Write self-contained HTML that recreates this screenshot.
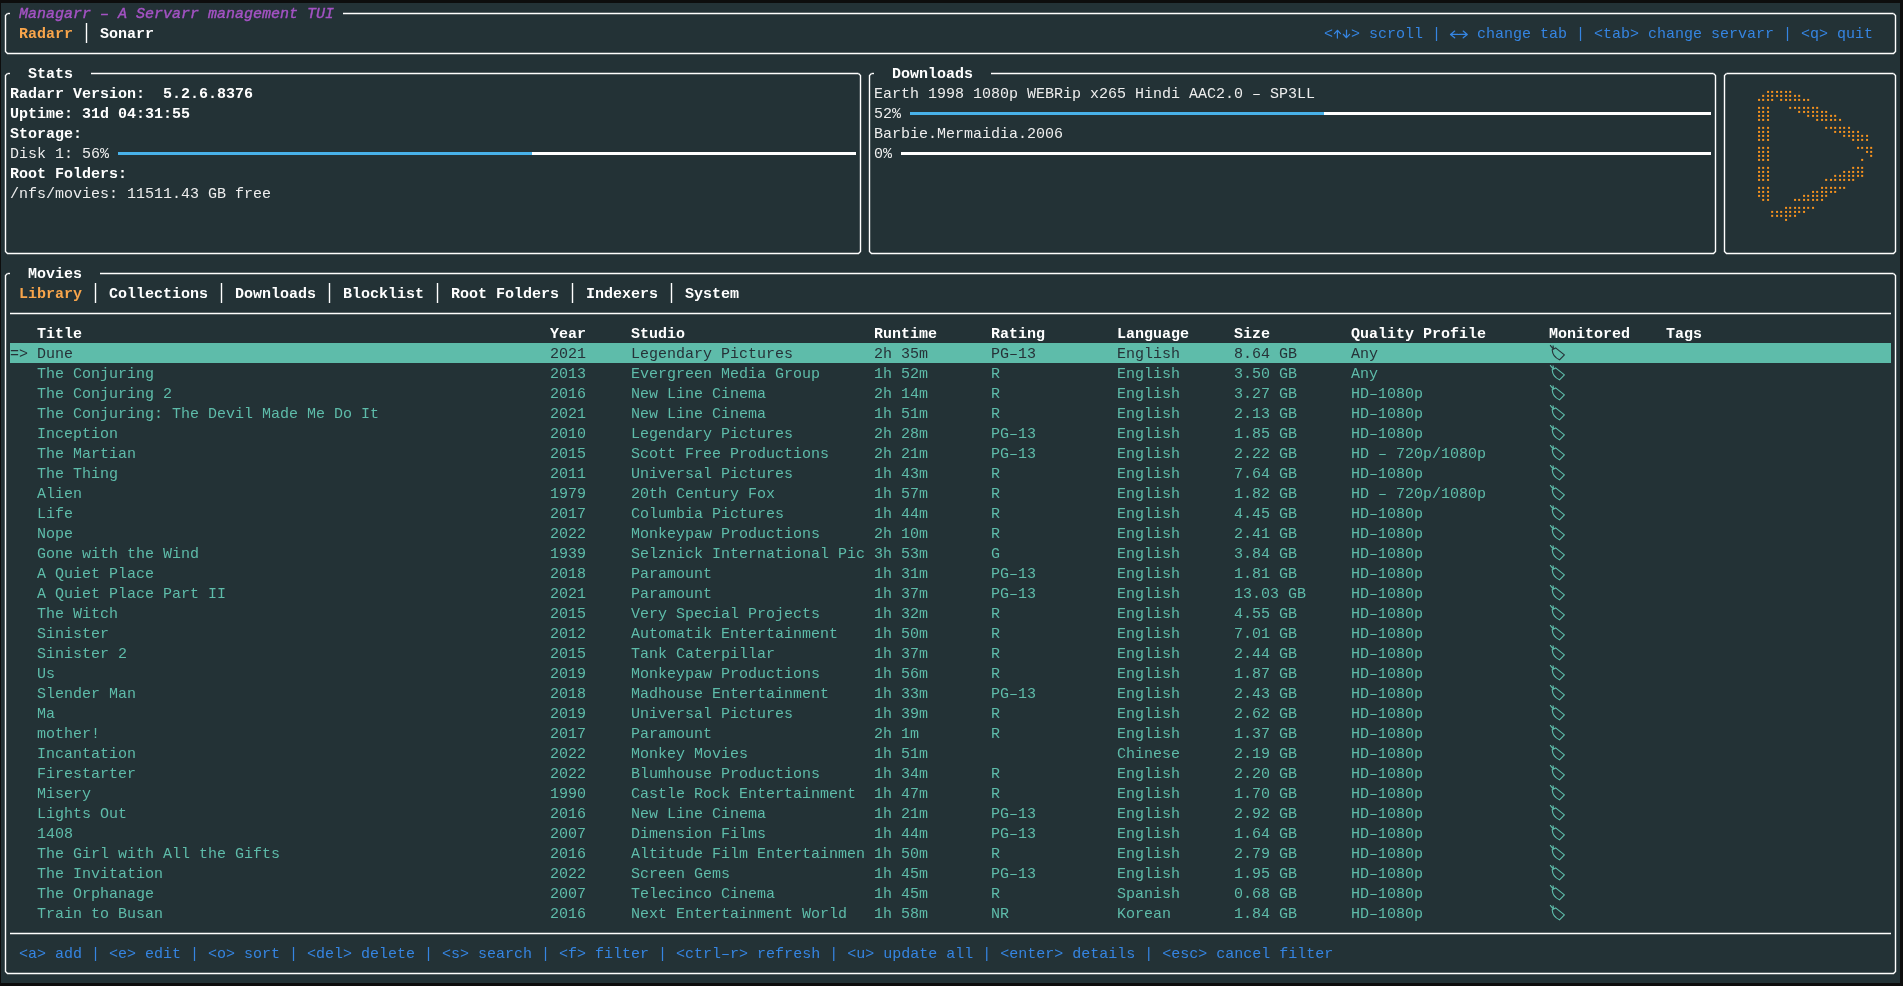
<!DOCTYPE html>
<html><head><meta charset="utf-8"><style>
html,body{margin:0;padding:0;width:1903px;height:986px;overflow:hidden;background:#0d0d0d;}
#term{position:absolute;left:1px;top:3px;width:1899px;height:980px;background:#233236;}
.t{position:absolute;white-space:pre;font-family:"Liberation Mono",monospace;font-size:15px;line-height:20px;height:20px;}
svg{position:absolute;left:0;top:0;}
#txt{position:absolute;left:0;top:0;width:1903px;height:986px;will-change:transform;}
</style></head><body>
<div id="term"></div>
<div style="position:absolute;left:10px;top:343px;width:1881px;height:20px;background:#5ebcaa"></div>
<svg width="1903" height="986" viewBox="0 0 1903 986"><path d="M7.5,13.5 L5.5,15.5 L5.5,51.5 L7.5,53.5 L1893.5,53.5 L1895.5,51.5 L1895.5,15.5 L1893.5,13.5" fill="none" stroke="#ffffff" stroke-width="1.4"/><line x1="7.5" y1="13.5" x2="10" y2="13.5" stroke="#ffffff" stroke-width="1.4"/><line x1="343" y1="13.5" x2="1893.5" y2="13.5" stroke="#ffffff" stroke-width="1.4"/><line x1="86.5" y1="23" x2="86.5" y2="43" stroke="#ffffff" stroke-width="1.4"/><path d="M1337.4,38 L1337.4,30.4 M1334.4,33.6 L1337.4,30.3 L1340.5,33.6 M1346.5,30.1 L1346.5,37.7 M1343.3,34.3 L1346.5,37.7 L1349.6,34.3 M1450.6,34.45 L1458.2,34.45 M1454.7,31.1 L1450.5,34.45 L1454.7,37.8 M1459.3,34.45 L1467.0,34.45 M1463.2,31.1 L1467.3,34.45 L1463.2,37.8 " fill="none" stroke="#3585e2" stroke-width="1.25" stroke-linecap="round" stroke-linejoin="round"/><path d="M7.5,73.5 L5.5,75.5 L5.5,251.5 L7.5,253.5 L858.5,253.5 L860.5,251.5 L860.5,75.5 L858.5,73.5" fill="none" stroke="#ffffff" stroke-width="1.4"/><line x1="7.5" y1="73.5" x2="10" y2="73.5" stroke="#ffffff" stroke-width="1.4"/><line x1="91" y1="73.5" x2="858.5" y2="73.5" stroke="#ffffff" stroke-width="1.4"/><rect x="118" y="152" width="414" height="3" fill="#48b2ea"/><rect x="532" y="152" width="324" height="3" fill="#ffffff"/><path d="M871.5,73.5 L869.5,75.5 L869.5,251.5 L871.5,253.5 L1713.5,253.5 L1715.5,251.5 L1715.5,75.5 L1713.5,73.5" fill="none" stroke="#ffffff" stroke-width="1.4"/><line x1="871.5" y1="73.5" x2="874" y2="73.5" stroke="#ffffff" stroke-width="1.4"/><line x1="991" y1="73.5" x2="1713.5" y2="73.5" stroke="#ffffff" stroke-width="1.4"/><rect x="910" y="112" width="414" height="3" fill="#48b2ea"/><rect x="1324" y="112" width="387" height="3" fill="#ffffff"/><rect x="901" y="152" width="810" height="3" fill="#ffffff"/><path d="M1726.5,73.5 L1724.5,75.5 L1724.5,251.5 L1726.5,253.5 L1893.5,253.5 L1895.5,251.5 L1895.5,75.5 L1893.5,73.5" fill="none" stroke="#ffffff" stroke-width="1.4"/><line x1="1726.5" y1="73.5" x2="1893.5" y2="73.5" stroke="#ffffff" stroke-width="1.4"/><rect x="1767.06" y="90.90" width="2" height="2" fill="#f7931e"/><rect x="1771.17" y="90.90" width="2" height="2" fill="#f7931e"/><rect x="1776.06" y="90.90" width="2" height="2" fill="#f7931e"/><rect x="1780.17" y="90.90" width="2" height="2" fill="#f7931e"/><rect x="1785.06" y="90.90" width="2" height="2" fill="#f7931e"/><rect x="1789.17" y="90.90" width="2" height="2" fill="#f7931e"/><rect x="1762.17" y="94.85" width="2" height="2" fill="#f7931e"/><rect x="1767.06" y="94.85" width="2" height="2" fill="#f7931e"/><rect x="1771.17" y="94.85" width="2" height="2" fill="#f7931e"/><rect x="1776.06" y="94.85" width="2" height="2" fill="#f7931e"/><rect x="1780.17" y="94.85" width="2" height="2" fill="#f7931e"/><rect x="1785.06" y="94.85" width="2" height="2" fill="#f7931e"/><rect x="1789.17" y="94.85" width="2" height="2" fill="#f7931e"/><rect x="1794.06" y="94.85" width="2" height="2" fill="#f7931e"/><rect x="1798.17" y="94.85" width="2" height="2" fill="#f7931e"/><rect x="1758.06" y="98.90" width="2" height="2" fill="#f7931e"/><rect x="1762.17" y="98.90" width="2" height="2" fill="#f7931e"/><rect x="1767.06" y="98.90" width="2" height="2" fill="#f7931e"/><rect x="1771.17" y="98.90" width="2" height="2" fill="#f7931e"/><rect x="1780.17" y="98.90" width="2" height="2" fill="#f7931e"/><rect x="1785.06" y="98.90" width="2" height="2" fill="#f7931e"/><rect x="1789.17" y="98.90" width="2" height="2" fill="#f7931e"/><rect x="1794.06" y="98.90" width="2" height="2" fill="#f7931e"/><rect x="1798.17" y="98.90" width="2" height="2" fill="#f7931e"/><rect x="1803.06" y="98.90" width="2" height="2" fill="#f7931e"/><rect x="1807.17" y="98.90" width="2" height="2" fill="#f7931e"/><rect x="1758.06" y="106.85" width="2" height="2" fill="#f7931e"/><rect x="1762.17" y="106.85" width="2" height="2" fill="#f7931e"/><rect x="1767.06" y="106.85" width="2" height="2" fill="#f7931e"/><rect x="1789.17" y="106.85" width="2" height="2" fill="#f7931e"/><rect x="1794.06" y="106.85" width="2" height="2" fill="#f7931e"/><rect x="1798.17" y="106.85" width="2" height="2" fill="#f7931e"/><rect x="1803.06" y="106.85" width="2" height="2" fill="#f7931e"/><rect x="1807.17" y="106.85" width="2" height="2" fill="#f7931e"/><rect x="1812.06" y="106.85" width="2" height="2" fill="#f7931e"/><rect x="1816.17" y="106.85" width="2" height="2" fill="#f7931e"/><rect x="1758.06" y="110.90" width="2" height="2" fill="#f7931e"/><rect x="1762.17" y="110.90" width="2" height="2" fill="#f7931e"/><rect x="1767.06" y="110.90" width="2" height="2" fill="#f7931e"/><rect x="1798.17" y="110.90" width="2" height="2" fill="#f7931e"/><rect x="1803.06" y="110.90" width="2" height="2" fill="#f7931e"/><rect x="1807.17" y="110.90" width="2" height="2" fill="#f7931e"/><rect x="1812.06" y="110.90" width="2" height="2" fill="#f7931e"/><rect x="1816.17" y="110.90" width="2" height="2" fill="#f7931e"/><rect x="1821.06" y="110.90" width="2" height="2" fill="#f7931e"/><rect x="1825.17" y="110.90" width="2" height="2" fill="#f7931e"/><rect x="1758.06" y="114.85" width="2" height="2" fill="#f7931e"/><rect x="1762.17" y="114.85" width="2" height="2" fill="#f7931e"/><rect x="1767.06" y="114.85" width="2" height="2" fill="#f7931e"/><rect x="1807.17" y="114.85" width="2" height="2" fill="#f7931e"/><rect x="1812.06" y="114.85" width="2" height="2" fill="#f7931e"/><rect x="1816.17" y="114.85" width="2" height="2" fill="#f7931e"/><rect x="1821.06" y="114.85" width="2" height="2" fill="#f7931e"/><rect x="1825.17" y="114.85" width="2" height="2" fill="#f7931e"/><rect x="1830.06" y="114.85" width="2" height="2" fill="#f7931e"/><rect x="1834.17" y="114.85" width="2" height="2" fill="#f7931e"/><rect x="1758.06" y="118.90" width="2" height="2" fill="#f7931e"/><rect x="1762.17" y="118.90" width="2" height="2" fill="#f7931e"/><rect x="1767.06" y="118.90" width="2" height="2" fill="#f7931e"/><rect x="1816.17" y="118.90" width="2" height="2" fill="#f7931e"/><rect x="1821.06" y="118.90" width="2" height="2" fill="#f7931e"/><rect x="1825.17" y="118.90" width="2" height="2" fill="#f7931e"/><rect x="1830.06" y="118.90" width="2" height="2" fill="#f7931e"/><rect x="1834.17" y="118.90" width="2" height="2" fill="#f7931e"/><rect x="1839.06" y="118.90" width="2" height="2" fill="#f7931e"/><rect x="1758.06" y="126.85" width="2" height="2" fill="#f7931e"/><rect x="1762.17" y="126.85" width="2" height="2" fill="#f7931e"/><rect x="1767.06" y="126.85" width="2" height="2" fill="#f7931e"/><rect x="1825.17" y="126.85" width="2" height="2" fill="#f7931e"/><rect x="1830.06" y="126.85" width="2" height="2" fill="#f7931e"/><rect x="1834.17" y="126.85" width="2" height="2" fill="#f7931e"/><rect x="1839.06" y="126.85" width="2" height="2" fill="#f7931e"/><rect x="1843.17" y="126.85" width="2" height="2" fill="#f7931e"/><rect x="1848.06" y="126.85" width="2" height="2" fill="#f7931e"/><rect x="1758.06" y="130.90" width="2" height="2" fill="#f7931e"/><rect x="1762.17" y="130.90" width="2" height="2" fill="#f7931e"/><rect x="1767.06" y="130.90" width="2" height="2" fill="#f7931e"/><rect x="1834.17" y="130.90" width="2" height="2" fill="#f7931e"/><rect x="1839.06" y="130.90" width="2" height="2" fill="#f7931e"/><rect x="1843.17" y="130.90" width="2" height="2" fill="#f7931e"/><rect x="1848.06" y="130.90" width="2" height="2" fill="#f7931e"/><rect x="1852.17" y="130.90" width="2" height="2" fill="#f7931e"/><rect x="1857.06" y="130.90" width="2" height="2" fill="#f7931e"/><rect x="1758.06" y="134.85" width="2" height="2" fill="#f7931e"/><rect x="1762.17" y="134.85" width="2" height="2" fill="#f7931e"/><rect x="1767.06" y="134.85" width="2" height="2" fill="#f7931e"/><rect x="1843.17" y="134.85" width="2" height="2" fill="#f7931e"/><rect x="1848.06" y="134.85" width="2" height="2" fill="#f7931e"/><rect x="1852.17" y="134.85" width="2" height="2" fill="#f7931e"/><rect x="1857.06" y="134.85" width="2" height="2" fill="#f7931e"/><rect x="1861.17" y="134.85" width="2" height="2" fill="#f7931e"/><rect x="1866.06" y="134.85" width="2" height="2" fill="#f7931e"/><rect x="1758.06" y="138.90" width="2" height="2" fill="#f7931e"/><rect x="1762.17" y="138.90" width="2" height="2" fill="#f7931e"/><rect x="1767.06" y="138.90" width="2" height="2" fill="#f7931e"/><rect x="1852.17" y="138.90" width="2" height="2" fill="#f7931e"/><rect x="1857.06" y="138.90" width="2" height="2" fill="#f7931e"/><rect x="1861.17" y="138.90" width="2" height="2" fill="#f7931e"/><rect x="1866.06" y="138.90" width="2" height="2" fill="#f7931e"/><rect x="1758.06" y="146.85" width="2" height="2" fill="#f7931e"/><rect x="1762.17" y="146.85" width="2" height="2" fill="#f7931e"/><rect x="1767.06" y="146.85" width="2" height="2" fill="#f7931e"/><rect x="1857.06" y="146.85" width="2" height="2" fill="#f7931e"/><rect x="1861.17" y="146.85" width="2" height="2" fill="#f7931e"/><rect x="1866.06" y="146.85" width="2" height="2" fill="#f7931e"/><rect x="1870.17" y="146.85" width="2" height="2" fill="#f7931e"/><rect x="1758.06" y="150.90" width="2" height="2" fill="#f7931e"/><rect x="1762.17" y="150.90" width="2" height="2" fill="#f7931e"/><rect x="1767.06" y="150.90" width="2" height="2" fill="#f7931e"/><rect x="1866.06" y="150.90" width="2" height="2" fill="#f7931e"/><rect x="1870.17" y="150.90" width="2" height="2" fill="#f7931e"/><rect x="1758.06" y="154.85" width="2" height="2" fill="#f7931e"/><rect x="1762.17" y="154.85" width="2" height="2" fill="#f7931e"/><rect x="1767.06" y="154.85" width="2" height="2" fill="#f7931e"/><rect x="1870.17" y="154.85" width="2" height="2" fill="#f7931e"/><rect x="1758.06" y="158.90" width="2" height="2" fill="#f7931e"/><rect x="1762.17" y="158.90" width="2" height="2" fill="#f7931e"/><rect x="1767.06" y="158.90" width="2" height="2" fill="#f7931e"/><rect x="1861.17" y="158.90" width="2" height="2" fill="#f7931e"/><rect x="1758.06" y="166.85" width="2" height="2" fill="#f7931e"/><rect x="1762.17" y="166.85" width="2" height="2" fill="#f7931e"/><rect x="1767.06" y="166.85" width="2" height="2" fill="#f7931e"/><rect x="1852.17" y="166.85" width="2" height="2" fill="#f7931e"/><rect x="1857.06" y="166.85" width="2" height="2" fill="#f7931e"/><rect x="1861.17" y="166.85" width="2" height="2" fill="#f7931e"/><rect x="1758.06" y="170.90" width="2" height="2" fill="#f7931e"/><rect x="1762.17" y="170.90" width="2" height="2" fill="#f7931e"/><rect x="1767.06" y="170.90" width="2" height="2" fill="#f7931e"/><rect x="1843.17" y="170.90" width="2" height="2" fill="#f7931e"/><rect x="1848.06" y="170.90" width="2" height="2" fill="#f7931e"/><rect x="1852.17" y="170.90" width="2" height="2" fill="#f7931e"/><rect x="1857.06" y="170.90" width="2" height="2" fill="#f7931e"/><rect x="1861.17" y="170.90" width="2" height="2" fill="#f7931e"/><rect x="1758.06" y="174.85" width="2" height="2" fill="#f7931e"/><rect x="1762.17" y="174.85" width="2" height="2" fill="#f7931e"/><rect x="1767.06" y="174.85" width="2" height="2" fill="#f7931e"/><rect x="1834.17" y="174.85" width="2" height="2" fill="#f7931e"/><rect x="1839.06" y="174.85" width="2" height="2" fill="#f7931e"/><rect x="1843.17" y="174.85" width="2" height="2" fill="#f7931e"/><rect x="1848.06" y="174.85" width="2" height="2" fill="#f7931e"/><rect x="1852.17" y="174.85" width="2" height="2" fill="#f7931e"/><rect x="1857.06" y="174.85" width="2" height="2" fill="#f7931e"/><rect x="1861.17" y="174.85" width="2" height="2" fill="#f7931e"/><rect x="1758.06" y="178.90" width="2" height="2" fill="#f7931e"/><rect x="1762.17" y="178.90" width="2" height="2" fill="#f7931e"/><rect x="1767.06" y="178.90" width="2" height="2" fill="#f7931e"/><rect x="1825.17" y="178.90" width="2" height="2" fill="#f7931e"/><rect x="1830.06" y="178.90" width="2" height="2" fill="#f7931e"/><rect x="1834.17" y="178.90" width="2" height="2" fill="#f7931e"/><rect x="1839.06" y="178.90" width="2" height="2" fill="#f7931e"/><rect x="1843.17" y="178.90" width="2" height="2" fill="#f7931e"/><rect x="1848.06" y="178.90" width="2" height="2" fill="#f7931e"/><rect x="1852.17" y="178.90" width="2" height="2" fill="#f7931e"/><rect x="1758.06" y="186.85" width="2" height="2" fill="#f7931e"/><rect x="1762.17" y="186.85" width="2" height="2" fill="#f7931e"/><rect x="1767.06" y="186.85" width="2" height="2" fill="#f7931e"/><rect x="1821.06" y="186.85" width="2" height="2" fill="#f7931e"/><rect x="1825.17" y="186.85" width="2" height="2" fill="#f7931e"/><rect x="1830.06" y="186.85" width="2" height="2" fill="#f7931e"/><rect x="1834.17" y="186.85" width="2" height="2" fill="#f7931e"/><rect x="1839.06" y="186.85" width="2" height="2" fill="#f7931e"/><rect x="1843.17" y="186.85" width="2" height="2" fill="#f7931e"/><rect x="1758.06" y="190.90" width="2" height="2" fill="#f7931e"/><rect x="1762.17" y="190.90" width="2" height="2" fill="#f7931e"/><rect x="1767.06" y="190.90" width="2" height="2" fill="#f7931e"/><rect x="1812.06" y="190.90" width="2" height="2" fill="#f7931e"/><rect x="1816.17" y="190.90" width="2" height="2" fill="#f7931e"/><rect x="1821.06" y="190.90" width="2" height="2" fill="#f7931e"/><rect x="1825.17" y="190.90" width="2" height="2" fill="#f7931e"/><rect x="1830.06" y="190.90" width="2" height="2" fill="#f7931e"/><rect x="1834.17" y="190.90" width="2" height="2" fill="#f7931e"/><rect x="1758.06" y="194.85" width="2" height="2" fill="#f7931e"/><rect x="1762.17" y="194.85" width="2" height="2" fill="#f7931e"/><rect x="1767.06" y="194.85" width="2" height="2" fill="#f7931e"/><rect x="1803.06" y="194.85" width="2" height="2" fill="#f7931e"/><rect x="1807.17" y="194.85" width="2" height="2" fill="#f7931e"/><rect x="1812.06" y="194.85" width="2" height="2" fill="#f7931e"/><rect x="1816.17" y="194.85" width="2" height="2" fill="#f7931e"/><rect x="1821.06" y="194.85" width="2" height="2" fill="#f7931e"/><rect x="1825.17" y="194.85" width="2" height="2" fill="#f7931e"/><rect x="1762.17" y="198.90" width="2" height="2" fill="#f7931e"/><rect x="1767.06" y="198.90" width="2" height="2" fill="#f7931e"/><rect x="1794.06" y="198.90" width="2" height="2" fill="#f7931e"/><rect x="1798.17" y="198.90" width="2" height="2" fill="#f7931e"/><rect x="1803.06" y="198.90" width="2" height="2" fill="#f7931e"/><rect x="1807.17" y="198.90" width="2" height="2" fill="#f7931e"/><rect x="1812.06" y="198.90" width="2" height="2" fill="#f7931e"/><rect x="1816.17" y="198.90" width="2" height="2" fill="#f7931e"/><rect x="1821.06" y="198.90" width="2" height="2" fill="#f7931e"/><rect x="1785.06" y="206.85" width="2" height="2" fill="#f7931e"/><rect x="1789.17" y="206.85" width="2" height="2" fill="#f7931e"/><rect x="1794.06" y="206.85" width="2" height="2" fill="#f7931e"/><rect x="1798.17" y="206.85" width="2" height="2" fill="#f7931e"/><rect x="1803.06" y="206.85" width="2" height="2" fill="#f7931e"/><rect x="1807.17" y="206.85" width="2" height="2" fill="#f7931e"/><rect x="1812.06" y="206.85" width="2" height="2" fill="#f7931e"/><rect x="1771.17" y="210.90" width="2" height="2" fill="#f7931e"/><rect x="1776.06" y="210.90" width="2" height="2" fill="#f7931e"/><rect x="1780.17" y="210.90" width="2" height="2" fill="#f7931e"/><rect x="1785.06" y="210.90" width="2" height="2" fill="#f7931e"/><rect x="1789.17" y="210.90" width="2" height="2" fill="#f7931e"/><rect x="1794.06" y="210.90" width="2" height="2" fill="#f7931e"/><rect x="1798.17" y="210.90" width="2" height="2" fill="#f7931e"/><rect x="1803.06" y="210.90" width="2" height="2" fill="#f7931e"/><rect x="1771.17" y="214.85" width="2" height="2" fill="#f7931e"/><rect x="1776.06" y="214.85" width="2" height="2" fill="#f7931e"/><rect x="1780.17" y="214.85" width="2" height="2" fill="#f7931e"/><rect x="1785.06" y="214.85" width="2" height="2" fill="#f7931e"/><rect x="1789.17" y="214.85" width="2" height="2" fill="#f7931e"/><rect x="1794.06" y="214.85" width="2" height="2" fill="#f7931e"/><rect x="1785.06" y="218.90" width="2" height="2" fill="#f7931e"/><path d="M7.5,273.5 L5.5,275.5 L5.5,971.5 L7.5,973.5 L1893.5,973.5 L1895.5,971.5 L1895.5,275.5 L1893.5,273.5" fill="none" stroke="#ffffff" stroke-width="1.4"/><line x1="7.5" y1="273.5" x2="10" y2="273.5" stroke="#ffffff" stroke-width="1.4"/><line x1="100" y1="273.5" x2="1893.5" y2="273.5" stroke="#ffffff" stroke-width="1.4"/><line x1="95.5" y1="283" x2="95.5" y2="303" stroke="#ffffff" stroke-width="1.4"/><line x1="221.5" y1="283" x2="221.5" y2="303" stroke="#ffffff" stroke-width="1.4"/><line x1="329.5" y1="283" x2="329.5" y2="303" stroke="#ffffff" stroke-width="1.4"/><line x1="437.5" y1="283" x2="437.5" y2="303" stroke="#ffffff" stroke-width="1.4"/><line x1="572.5" y1="283" x2="572.5" y2="303" stroke="#ffffff" stroke-width="1.4"/><line x1="671.5" y1="283" x2="671.5" y2="303" stroke="#ffffff" stroke-width="1.4"/><line x1="10" y1="313.5" x2="1891" y2="313.5" stroke="#ffffff" stroke-width="1.4"/><path d="M1550.1,345.2 L1553.4,349.1 M1553.1,345.5 L1553.4,349.1 M1555.6,347.9 L1564.4,354.9 L1559.5,359.8 Q1552.5,356.5 1552.2,349.7 Z" fill="none" stroke="#263238" stroke-width="1.15" stroke-linejoin="round"/><path d="M1550.1,365.2 L1553.4,369.1 M1553.1,365.5 L1553.4,369.1 M1555.6,367.9 L1564.4,374.9 L1559.5,379.8 Q1552.5,376.5 1552.2,369.7 Z" fill="none" stroke="#5ebcaa" stroke-width="1.15" stroke-linejoin="round"/><path d="M1550.1,385.2 L1553.4,389.1 M1553.1,385.5 L1553.4,389.1 M1555.6,387.9 L1564.4,394.9 L1559.5,399.8 Q1552.5,396.5 1552.2,389.7 Z" fill="none" stroke="#5ebcaa" stroke-width="1.15" stroke-linejoin="round"/><path d="M1550.1,405.2 L1553.4,409.1 M1553.1,405.5 L1553.4,409.1 M1555.6,407.9 L1564.4,414.9 L1559.5,419.8 Q1552.5,416.5 1552.2,409.7 Z" fill="none" stroke="#5ebcaa" stroke-width="1.15" stroke-linejoin="round"/><path d="M1550.1,425.2 L1553.4,429.1 M1553.1,425.5 L1553.4,429.1 M1555.6,427.9 L1564.4,434.9 L1559.5,439.8 Q1552.5,436.5 1552.2,429.7 Z" fill="none" stroke="#5ebcaa" stroke-width="1.15" stroke-linejoin="round"/><path d="M1550.1,445.2 L1553.4,449.1 M1553.1,445.5 L1553.4,449.1 M1555.6,447.9 L1564.4,454.9 L1559.5,459.8 Q1552.5,456.5 1552.2,449.7 Z" fill="none" stroke="#5ebcaa" stroke-width="1.15" stroke-linejoin="round"/><path d="M1550.1,465.2 L1553.4,469.1 M1553.1,465.5 L1553.4,469.1 M1555.6,467.9 L1564.4,474.9 L1559.5,479.8 Q1552.5,476.5 1552.2,469.7 Z" fill="none" stroke="#5ebcaa" stroke-width="1.15" stroke-linejoin="round"/><path d="M1550.1,485.2 L1553.4,489.1 M1553.1,485.5 L1553.4,489.1 M1555.6,487.9 L1564.4,494.9 L1559.5,499.8 Q1552.5,496.5 1552.2,489.7 Z" fill="none" stroke="#5ebcaa" stroke-width="1.15" stroke-linejoin="round"/><path d="M1550.1,505.2 L1553.4,509.1 M1553.1,505.5 L1553.4,509.1 M1555.6,507.9 L1564.4,514.9 L1559.5,519.8 Q1552.5,516.5 1552.2,509.7 Z" fill="none" stroke="#5ebcaa" stroke-width="1.15" stroke-linejoin="round"/><path d="M1550.1,525.2 L1553.4,529.1 M1553.1,525.5 L1553.4,529.1 M1555.6,527.9 L1564.4,534.9 L1559.5,539.8 Q1552.5,536.5 1552.2,529.7 Z" fill="none" stroke="#5ebcaa" stroke-width="1.15" stroke-linejoin="round"/><path d="M1550.1,545.2 L1553.4,549.1 M1553.1,545.5 L1553.4,549.1 M1555.6,547.9 L1564.4,554.9 L1559.5,559.8 Q1552.5,556.5 1552.2,549.7 Z" fill="none" stroke="#5ebcaa" stroke-width="1.15" stroke-linejoin="round"/><path d="M1550.1,565.2 L1553.4,569.1 M1553.1,565.5 L1553.4,569.1 M1555.6,567.9 L1564.4,574.9 L1559.5,579.8 Q1552.5,576.5 1552.2,569.7 Z" fill="none" stroke="#5ebcaa" stroke-width="1.15" stroke-linejoin="round"/><path d="M1550.1,585.2 L1553.4,589.1 M1553.1,585.5 L1553.4,589.1 M1555.6,587.9 L1564.4,594.9 L1559.5,599.8 Q1552.5,596.5 1552.2,589.7 Z" fill="none" stroke="#5ebcaa" stroke-width="1.15" stroke-linejoin="round"/><path d="M1550.1,605.2 L1553.4,609.1 M1553.1,605.5 L1553.4,609.1 M1555.6,607.9 L1564.4,614.9 L1559.5,619.8 Q1552.5,616.5 1552.2,609.7 Z" fill="none" stroke="#5ebcaa" stroke-width="1.15" stroke-linejoin="round"/><path d="M1550.1,625.2 L1553.4,629.1 M1553.1,625.5 L1553.4,629.1 M1555.6,627.9 L1564.4,634.9 L1559.5,639.8 Q1552.5,636.5 1552.2,629.7 Z" fill="none" stroke="#5ebcaa" stroke-width="1.15" stroke-linejoin="round"/><path d="M1550.1,645.2 L1553.4,649.1 M1553.1,645.5 L1553.4,649.1 M1555.6,647.9 L1564.4,654.9 L1559.5,659.8 Q1552.5,656.5 1552.2,649.7 Z" fill="none" stroke="#5ebcaa" stroke-width="1.15" stroke-linejoin="round"/><path d="M1550.1,665.2 L1553.4,669.1 M1553.1,665.5 L1553.4,669.1 M1555.6,667.9 L1564.4,674.9 L1559.5,679.8 Q1552.5,676.5 1552.2,669.7 Z" fill="none" stroke="#5ebcaa" stroke-width="1.15" stroke-linejoin="round"/><path d="M1550.1,685.2 L1553.4,689.1 M1553.1,685.5 L1553.4,689.1 M1555.6,687.9 L1564.4,694.9 L1559.5,699.8 Q1552.5,696.5 1552.2,689.7 Z" fill="none" stroke="#5ebcaa" stroke-width="1.15" stroke-linejoin="round"/><path d="M1550.1,705.2 L1553.4,709.1 M1553.1,705.5 L1553.4,709.1 M1555.6,707.9 L1564.4,714.9 L1559.5,719.8 Q1552.5,716.5 1552.2,709.7 Z" fill="none" stroke="#5ebcaa" stroke-width="1.15" stroke-linejoin="round"/><path d="M1550.1,725.2 L1553.4,729.1 M1553.1,725.5 L1553.4,729.1 M1555.6,727.9 L1564.4,734.9 L1559.5,739.8 Q1552.5,736.5 1552.2,729.7 Z" fill="none" stroke="#5ebcaa" stroke-width="1.15" stroke-linejoin="round"/><path d="M1550.1,745.2 L1553.4,749.1 M1553.1,745.5 L1553.4,749.1 M1555.6,747.9 L1564.4,754.9 L1559.5,759.8 Q1552.5,756.5 1552.2,749.7 Z" fill="none" stroke="#5ebcaa" stroke-width="1.15" stroke-linejoin="round"/><path d="M1550.1,765.2 L1553.4,769.1 M1553.1,765.5 L1553.4,769.1 M1555.6,767.9 L1564.4,774.9 L1559.5,779.8 Q1552.5,776.5 1552.2,769.7 Z" fill="none" stroke="#5ebcaa" stroke-width="1.15" stroke-linejoin="round"/><path d="M1550.1,785.2 L1553.4,789.1 M1553.1,785.5 L1553.4,789.1 M1555.6,787.9 L1564.4,794.9 L1559.5,799.8 Q1552.5,796.5 1552.2,789.7 Z" fill="none" stroke="#5ebcaa" stroke-width="1.15" stroke-linejoin="round"/><path d="M1550.1,805.2 L1553.4,809.1 M1553.1,805.5 L1553.4,809.1 M1555.6,807.9 L1564.4,814.9 L1559.5,819.8 Q1552.5,816.5 1552.2,809.7 Z" fill="none" stroke="#5ebcaa" stroke-width="1.15" stroke-linejoin="round"/><path d="M1550.1,825.2 L1553.4,829.1 M1553.1,825.5 L1553.4,829.1 M1555.6,827.9 L1564.4,834.9 L1559.5,839.8 Q1552.5,836.5 1552.2,829.7 Z" fill="none" stroke="#5ebcaa" stroke-width="1.15" stroke-linejoin="round"/><path d="M1550.1,845.2 L1553.4,849.1 M1553.1,845.5 L1553.4,849.1 M1555.6,847.9 L1564.4,854.9 L1559.5,859.8 Q1552.5,856.5 1552.2,849.7 Z" fill="none" stroke="#5ebcaa" stroke-width="1.15" stroke-linejoin="round"/><path d="M1550.1,865.2 L1553.4,869.1 M1553.1,865.5 L1553.4,869.1 M1555.6,867.9 L1564.4,874.9 L1559.5,879.8 Q1552.5,876.5 1552.2,869.7 Z" fill="none" stroke="#5ebcaa" stroke-width="1.15" stroke-linejoin="round"/><path d="M1550.1,885.2 L1553.4,889.1 M1553.1,885.5 L1553.4,889.1 M1555.6,887.9 L1564.4,894.9 L1559.5,899.8 Q1552.5,896.5 1552.2,889.7 Z" fill="none" stroke="#5ebcaa" stroke-width="1.15" stroke-linejoin="round"/><path d="M1550.1,905.2 L1553.4,909.1 M1553.1,905.5 L1553.4,909.1 M1555.6,907.9 L1564.4,914.9 L1559.5,919.8 Q1552.5,916.5 1552.2,909.7 Z" fill="none" stroke="#5ebcaa" stroke-width="1.15" stroke-linejoin="round"/><line x1="10" y1="933.5" x2="1891" y2="933.5" stroke="#ffffff" stroke-width="1.4"/></svg>
<div id="txt"><div class="t" style="left:19px;top:5px;color:#a453c4;-webkit-text-stroke:0.4px #a453c4;font-style:italic;">Managarr – A Servarr management TUI</div><div class="t" style="left:19px;top:25px;color:#f8a54b;font-weight:bold;">Radarr</div><div class="t" style="left:100px;top:25px;color:#ffffff;font-weight:bold;">Sonarr</div><div class="t" style="left:1324px;top:25px;color:#3585e2;">&lt;  &gt; scroll |    change tab | &lt;tab&gt; change servarr | &lt;q&gt; quit</div><div class="t" style="left:28px;top:65px;color:#ffffff;font-weight:bold;">Stats</div><div class="t" style="left:10px;top:85px;color:#ffffff;font-weight:bold;">Radarr Version:  5.2.6.8376</div><div class="t" style="left:10px;top:105px;color:#ffffff;font-weight:bold;">Uptime: 31d 04:31:55</div><div class="t" style="left:10px;top:125px;color:#ffffff;font-weight:bold;">Storage:</div><div class="t" style="left:10px;top:145px;color:#eeeeee;">Disk 1: 56%</div><div class="t" style="left:10px;top:165px;color:#ffffff;font-weight:bold;">Root Folders:</div><div class="t" style="left:10px;top:185px;color:#eeeeee;">/nfs/movies: 11511.43 GB free</div><div class="t" style="left:892px;top:65px;color:#ffffff;font-weight:bold;">Downloads</div><div class="t" style="left:874px;top:85px;color:#eeeeee;">Earth 1998 1080p WEBRip x265 Hindi AAC2.0 – SP3LL</div><div class="t" style="left:874px;top:105px;color:#eeeeee;">52%</div><div class="t" style="left:874px;top:125px;color:#eeeeee;">Barbie.Mermaidia.2006</div><div class="t" style="left:874px;top:145px;color:#eeeeee;">0%</div><div class="t" style="left:28px;top:265px;color:#ffffff;font-weight:bold;">Movies</div><div class="t" style="left:19px;top:285px;color:#f8a54b;font-weight:bold;">Library</div><div class="t" style="left:109px;top:285px;color:#ffffff;font-weight:bold;">Collections</div><div class="t" style="left:235px;top:285px;color:#ffffff;font-weight:bold;">Downloads</div><div class="t" style="left:343px;top:285px;color:#ffffff;font-weight:bold;">Blocklist</div><div class="t" style="left:451px;top:285px;color:#ffffff;font-weight:bold;">Root Folders</div><div class="t" style="left:586px;top:285px;color:#ffffff;font-weight:bold;">Indexers</div><div class="t" style="left:685px;top:285px;color:#ffffff;font-weight:bold;">System</div><div class="t" style="left:37px;top:325px;color:#ffffff;font-weight:bold;">Title</div><div class="t" style="left:550px;top:325px;color:#ffffff;font-weight:bold;">Year</div><div class="t" style="left:631px;top:325px;color:#ffffff;font-weight:bold;">Studio</div><div class="t" style="left:874px;top:325px;color:#ffffff;font-weight:bold;">Runtime</div><div class="t" style="left:991px;top:325px;color:#ffffff;font-weight:bold;">Rating</div><div class="t" style="left:1117px;top:325px;color:#ffffff;font-weight:bold;">Language</div><div class="t" style="left:1234px;top:325px;color:#ffffff;font-weight:bold;">Size</div><div class="t" style="left:1351px;top:325px;color:#ffffff;font-weight:bold;">Quality Profile</div><div class="t" style="left:1549px;top:325px;color:#ffffff;font-weight:bold;">Monitored</div><div class="t" style="left:1666px;top:325px;color:#ffffff;font-weight:bold;">Tags</div><div class="t" style="left:10px;top:345px;color:#263238;">=&gt;</div><div class="t" style="left:37px;top:345px;color:#263238;">Dune</div><div class="t" style="left:550px;top:345px;color:#263238;">2021</div><div class="t" style="left:631px;top:345px;color:#263238;">Legendary Pictures</div><div class="t" style="left:874px;top:345px;color:#263238;">2h 35m</div><div class="t" style="left:991px;top:345px;color:#263238;">PG–13</div><div class="t" style="left:1117px;top:345px;color:#263238;">English</div><div class="t" style="left:1234px;top:345px;color:#263238;">8.64 GB</div><div class="t" style="left:1351px;top:345px;color:#263238;">Any</div><div class="t" style="left:37px;top:365px;color:#5ebcaa;">The Conjuring</div><div class="t" style="left:550px;top:365px;color:#5ebcaa;">2013</div><div class="t" style="left:631px;top:365px;color:#5ebcaa;">Evergreen Media Group</div><div class="t" style="left:874px;top:365px;color:#5ebcaa;">1h 52m</div><div class="t" style="left:991px;top:365px;color:#5ebcaa;">R</div><div class="t" style="left:1117px;top:365px;color:#5ebcaa;">English</div><div class="t" style="left:1234px;top:365px;color:#5ebcaa;">3.50 GB</div><div class="t" style="left:1351px;top:365px;color:#5ebcaa;">Any</div><div class="t" style="left:37px;top:385px;color:#5ebcaa;">The Conjuring 2</div><div class="t" style="left:550px;top:385px;color:#5ebcaa;">2016</div><div class="t" style="left:631px;top:385px;color:#5ebcaa;">New Line Cinema</div><div class="t" style="left:874px;top:385px;color:#5ebcaa;">2h 14m</div><div class="t" style="left:991px;top:385px;color:#5ebcaa;">R</div><div class="t" style="left:1117px;top:385px;color:#5ebcaa;">English</div><div class="t" style="left:1234px;top:385px;color:#5ebcaa;">3.27 GB</div><div class="t" style="left:1351px;top:385px;color:#5ebcaa;">HD–1080p</div><div class="t" style="left:37px;top:405px;color:#5ebcaa;">The Conjuring: The Devil Made Me Do It</div><div class="t" style="left:550px;top:405px;color:#5ebcaa;">2021</div><div class="t" style="left:631px;top:405px;color:#5ebcaa;">New Line Cinema</div><div class="t" style="left:874px;top:405px;color:#5ebcaa;">1h 51m</div><div class="t" style="left:991px;top:405px;color:#5ebcaa;">R</div><div class="t" style="left:1117px;top:405px;color:#5ebcaa;">English</div><div class="t" style="left:1234px;top:405px;color:#5ebcaa;">2.13 GB</div><div class="t" style="left:1351px;top:405px;color:#5ebcaa;">HD–1080p</div><div class="t" style="left:37px;top:425px;color:#5ebcaa;">Inception</div><div class="t" style="left:550px;top:425px;color:#5ebcaa;">2010</div><div class="t" style="left:631px;top:425px;color:#5ebcaa;">Legendary Pictures</div><div class="t" style="left:874px;top:425px;color:#5ebcaa;">2h 28m</div><div class="t" style="left:991px;top:425px;color:#5ebcaa;">PG–13</div><div class="t" style="left:1117px;top:425px;color:#5ebcaa;">English</div><div class="t" style="left:1234px;top:425px;color:#5ebcaa;">1.85 GB</div><div class="t" style="left:1351px;top:425px;color:#5ebcaa;">HD–1080p</div><div class="t" style="left:37px;top:445px;color:#5ebcaa;">The Martian</div><div class="t" style="left:550px;top:445px;color:#5ebcaa;">2015</div><div class="t" style="left:631px;top:445px;color:#5ebcaa;">Scott Free Productions</div><div class="t" style="left:874px;top:445px;color:#5ebcaa;">2h 21m</div><div class="t" style="left:991px;top:445px;color:#5ebcaa;">PG–13</div><div class="t" style="left:1117px;top:445px;color:#5ebcaa;">English</div><div class="t" style="left:1234px;top:445px;color:#5ebcaa;">2.22 GB</div><div class="t" style="left:1351px;top:445px;color:#5ebcaa;">HD – 720p/1080p</div><div class="t" style="left:37px;top:465px;color:#5ebcaa;">The Thing</div><div class="t" style="left:550px;top:465px;color:#5ebcaa;">2011</div><div class="t" style="left:631px;top:465px;color:#5ebcaa;">Universal Pictures</div><div class="t" style="left:874px;top:465px;color:#5ebcaa;">1h 43m</div><div class="t" style="left:991px;top:465px;color:#5ebcaa;">R</div><div class="t" style="left:1117px;top:465px;color:#5ebcaa;">English</div><div class="t" style="left:1234px;top:465px;color:#5ebcaa;">7.64 GB</div><div class="t" style="left:1351px;top:465px;color:#5ebcaa;">HD–1080p</div><div class="t" style="left:37px;top:485px;color:#5ebcaa;">Alien</div><div class="t" style="left:550px;top:485px;color:#5ebcaa;">1979</div><div class="t" style="left:631px;top:485px;color:#5ebcaa;">20th Century Fox</div><div class="t" style="left:874px;top:485px;color:#5ebcaa;">1h 57m</div><div class="t" style="left:991px;top:485px;color:#5ebcaa;">R</div><div class="t" style="left:1117px;top:485px;color:#5ebcaa;">English</div><div class="t" style="left:1234px;top:485px;color:#5ebcaa;">1.82 GB</div><div class="t" style="left:1351px;top:485px;color:#5ebcaa;">HD – 720p/1080p</div><div class="t" style="left:37px;top:505px;color:#5ebcaa;">Life</div><div class="t" style="left:550px;top:505px;color:#5ebcaa;">2017</div><div class="t" style="left:631px;top:505px;color:#5ebcaa;">Columbia Pictures</div><div class="t" style="left:874px;top:505px;color:#5ebcaa;">1h 44m</div><div class="t" style="left:991px;top:505px;color:#5ebcaa;">R</div><div class="t" style="left:1117px;top:505px;color:#5ebcaa;">English</div><div class="t" style="left:1234px;top:505px;color:#5ebcaa;">4.45 GB</div><div class="t" style="left:1351px;top:505px;color:#5ebcaa;">HD–1080p</div><div class="t" style="left:37px;top:525px;color:#5ebcaa;">Nope</div><div class="t" style="left:550px;top:525px;color:#5ebcaa;">2022</div><div class="t" style="left:631px;top:525px;color:#5ebcaa;">Monkeypaw Productions</div><div class="t" style="left:874px;top:525px;color:#5ebcaa;">2h 10m</div><div class="t" style="left:991px;top:525px;color:#5ebcaa;">R</div><div class="t" style="left:1117px;top:525px;color:#5ebcaa;">English</div><div class="t" style="left:1234px;top:525px;color:#5ebcaa;">2.41 GB</div><div class="t" style="left:1351px;top:525px;color:#5ebcaa;">HD–1080p</div><div class="t" style="left:37px;top:545px;color:#5ebcaa;">Gone with the Wind</div><div class="t" style="left:550px;top:545px;color:#5ebcaa;">1939</div><div class="t" style="left:631px;top:545px;color:#5ebcaa;">Selznick International Pic</div><div class="t" style="left:874px;top:545px;color:#5ebcaa;">3h 53m</div><div class="t" style="left:991px;top:545px;color:#5ebcaa;">G</div><div class="t" style="left:1117px;top:545px;color:#5ebcaa;">English</div><div class="t" style="left:1234px;top:545px;color:#5ebcaa;">3.84 GB</div><div class="t" style="left:1351px;top:545px;color:#5ebcaa;">HD–1080p</div><div class="t" style="left:37px;top:565px;color:#5ebcaa;">A Quiet Place</div><div class="t" style="left:550px;top:565px;color:#5ebcaa;">2018</div><div class="t" style="left:631px;top:565px;color:#5ebcaa;">Paramount</div><div class="t" style="left:874px;top:565px;color:#5ebcaa;">1h 31m</div><div class="t" style="left:991px;top:565px;color:#5ebcaa;">PG–13</div><div class="t" style="left:1117px;top:565px;color:#5ebcaa;">English</div><div class="t" style="left:1234px;top:565px;color:#5ebcaa;">1.81 GB</div><div class="t" style="left:1351px;top:565px;color:#5ebcaa;">HD–1080p</div><div class="t" style="left:37px;top:585px;color:#5ebcaa;">A Quiet Place Part II</div><div class="t" style="left:550px;top:585px;color:#5ebcaa;">2021</div><div class="t" style="left:631px;top:585px;color:#5ebcaa;">Paramount</div><div class="t" style="left:874px;top:585px;color:#5ebcaa;">1h 37m</div><div class="t" style="left:991px;top:585px;color:#5ebcaa;">PG–13</div><div class="t" style="left:1117px;top:585px;color:#5ebcaa;">English</div><div class="t" style="left:1234px;top:585px;color:#5ebcaa;">13.03 GB</div><div class="t" style="left:1351px;top:585px;color:#5ebcaa;">HD–1080p</div><div class="t" style="left:37px;top:605px;color:#5ebcaa;">The Witch</div><div class="t" style="left:550px;top:605px;color:#5ebcaa;">2015</div><div class="t" style="left:631px;top:605px;color:#5ebcaa;">Very Special Projects</div><div class="t" style="left:874px;top:605px;color:#5ebcaa;">1h 32m</div><div class="t" style="left:991px;top:605px;color:#5ebcaa;">R</div><div class="t" style="left:1117px;top:605px;color:#5ebcaa;">English</div><div class="t" style="left:1234px;top:605px;color:#5ebcaa;">4.55 GB</div><div class="t" style="left:1351px;top:605px;color:#5ebcaa;">HD–1080p</div><div class="t" style="left:37px;top:625px;color:#5ebcaa;">Sinister</div><div class="t" style="left:550px;top:625px;color:#5ebcaa;">2012</div><div class="t" style="left:631px;top:625px;color:#5ebcaa;">Automatik Entertainment</div><div class="t" style="left:874px;top:625px;color:#5ebcaa;">1h 50m</div><div class="t" style="left:991px;top:625px;color:#5ebcaa;">R</div><div class="t" style="left:1117px;top:625px;color:#5ebcaa;">English</div><div class="t" style="left:1234px;top:625px;color:#5ebcaa;">7.01 GB</div><div class="t" style="left:1351px;top:625px;color:#5ebcaa;">HD–1080p</div><div class="t" style="left:37px;top:645px;color:#5ebcaa;">Sinister 2</div><div class="t" style="left:550px;top:645px;color:#5ebcaa;">2015</div><div class="t" style="left:631px;top:645px;color:#5ebcaa;">Tank Caterpillar</div><div class="t" style="left:874px;top:645px;color:#5ebcaa;">1h 37m</div><div class="t" style="left:991px;top:645px;color:#5ebcaa;">R</div><div class="t" style="left:1117px;top:645px;color:#5ebcaa;">English</div><div class="t" style="left:1234px;top:645px;color:#5ebcaa;">2.44 GB</div><div class="t" style="left:1351px;top:645px;color:#5ebcaa;">HD–1080p</div><div class="t" style="left:37px;top:665px;color:#5ebcaa;">Us</div><div class="t" style="left:550px;top:665px;color:#5ebcaa;">2019</div><div class="t" style="left:631px;top:665px;color:#5ebcaa;">Monkeypaw Productions</div><div class="t" style="left:874px;top:665px;color:#5ebcaa;">1h 56m</div><div class="t" style="left:991px;top:665px;color:#5ebcaa;">R</div><div class="t" style="left:1117px;top:665px;color:#5ebcaa;">English</div><div class="t" style="left:1234px;top:665px;color:#5ebcaa;">1.87 GB</div><div class="t" style="left:1351px;top:665px;color:#5ebcaa;">HD–1080p</div><div class="t" style="left:37px;top:685px;color:#5ebcaa;">Slender Man</div><div class="t" style="left:550px;top:685px;color:#5ebcaa;">2018</div><div class="t" style="left:631px;top:685px;color:#5ebcaa;">Madhouse Entertainment</div><div class="t" style="left:874px;top:685px;color:#5ebcaa;">1h 33m</div><div class="t" style="left:991px;top:685px;color:#5ebcaa;">PG–13</div><div class="t" style="left:1117px;top:685px;color:#5ebcaa;">English</div><div class="t" style="left:1234px;top:685px;color:#5ebcaa;">2.43 GB</div><div class="t" style="left:1351px;top:685px;color:#5ebcaa;">HD–1080p</div><div class="t" style="left:37px;top:705px;color:#5ebcaa;">Ma</div><div class="t" style="left:550px;top:705px;color:#5ebcaa;">2019</div><div class="t" style="left:631px;top:705px;color:#5ebcaa;">Universal Pictures</div><div class="t" style="left:874px;top:705px;color:#5ebcaa;">1h 39m</div><div class="t" style="left:991px;top:705px;color:#5ebcaa;">R</div><div class="t" style="left:1117px;top:705px;color:#5ebcaa;">English</div><div class="t" style="left:1234px;top:705px;color:#5ebcaa;">2.62 GB</div><div class="t" style="left:1351px;top:705px;color:#5ebcaa;">HD–1080p</div><div class="t" style="left:37px;top:725px;color:#5ebcaa;">mother!</div><div class="t" style="left:550px;top:725px;color:#5ebcaa;">2017</div><div class="t" style="left:631px;top:725px;color:#5ebcaa;">Paramount</div><div class="t" style="left:874px;top:725px;color:#5ebcaa;">2h 1m</div><div class="t" style="left:991px;top:725px;color:#5ebcaa;">R</div><div class="t" style="left:1117px;top:725px;color:#5ebcaa;">English</div><div class="t" style="left:1234px;top:725px;color:#5ebcaa;">1.37 GB</div><div class="t" style="left:1351px;top:725px;color:#5ebcaa;">HD–1080p</div><div class="t" style="left:37px;top:745px;color:#5ebcaa;">Incantation</div><div class="t" style="left:550px;top:745px;color:#5ebcaa;">2022</div><div class="t" style="left:631px;top:745px;color:#5ebcaa;">Monkey Movies</div><div class="t" style="left:874px;top:745px;color:#5ebcaa;">1h 51m</div><div class="t" style="left:1117px;top:745px;color:#5ebcaa;">Chinese</div><div class="t" style="left:1234px;top:745px;color:#5ebcaa;">2.19 GB</div><div class="t" style="left:1351px;top:745px;color:#5ebcaa;">HD–1080p</div><div class="t" style="left:37px;top:765px;color:#5ebcaa;">Firestarter</div><div class="t" style="left:550px;top:765px;color:#5ebcaa;">2022</div><div class="t" style="left:631px;top:765px;color:#5ebcaa;">Blumhouse Productions</div><div class="t" style="left:874px;top:765px;color:#5ebcaa;">1h 34m</div><div class="t" style="left:991px;top:765px;color:#5ebcaa;">R</div><div class="t" style="left:1117px;top:765px;color:#5ebcaa;">English</div><div class="t" style="left:1234px;top:765px;color:#5ebcaa;">2.20 GB</div><div class="t" style="left:1351px;top:765px;color:#5ebcaa;">HD–1080p</div><div class="t" style="left:37px;top:785px;color:#5ebcaa;">Misery</div><div class="t" style="left:550px;top:785px;color:#5ebcaa;">1990</div><div class="t" style="left:631px;top:785px;color:#5ebcaa;">Castle Rock Entertainment</div><div class="t" style="left:874px;top:785px;color:#5ebcaa;">1h 47m</div><div class="t" style="left:991px;top:785px;color:#5ebcaa;">R</div><div class="t" style="left:1117px;top:785px;color:#5ebcaa;">English</div><div class="t" style="left:1234px;top:785px;color:#5ebcaa;">1.70 GB</div><div class="t" style="left:1351px;top:785px;color:#5ebcaa;">HD–1080p</div><div class="t" style="left:37px;top:805px;color:#5ebcaa;">Lights Out</div><div class="t" style="left:550px;top:805px;color:#5ebcaa;">2016</div><div class="t" style="left:631px;top:805px;color:#5ebcaa;">New Line Cinema</div><div class="t" style="left:874px;top:805px;color:#5ebcaa;">1h 21m</div><div class="t" style="left:991px;top:805px;color:#5ebcaa;">PG–13</div><div class="t" style="left:1117px;top:805px;color:#5ebcaa;">English</div><div class="t" style="left:1234px;top:805px;color:#5ebcaa;">2.92 GB</div><div class="t" style="left:1351px;top:805px;color:#5ebcaa;">HD–1080p</div><div class="t" style="left:37px;top:825px;color:#5ebcaa;">1408</div><div class="t" style="left:550px;top:825px;color:#5ebcaa;">2007</div><div class="t" style="left:631px;top:825px;color:#5ebcaa;">Dimension Films</div><div class="t" style="left:874px;top:825px;color:#5ebcaa;">1h 44m</div><div class="t" style="left:991px;top:825px;color:#5ebcaa;">PG–13</div><div class="t" style="left:1117px;top:825px;color:#5ebcaa;">English</div><div class="t" style="left:1234px;top:825px;color:#5ebcaa;">1.64 GB</div><div class="t" style="left:1351px;top:825px;color:#5ebcaa;">HD–1080p</div><div class="t" style="left:37px;top:845px;color:#5ebcaa;">The Girl with All the Gifts</div><div class="t" style="left:550px;top:845px;color:#5ebcaa;">2016</div><div class="t" style="left:631px;top:845px;color:#5ebcaa;">Altitude Film Entertainmen</div><div class="t" style="left:874px;top:845px;color:#5ebcaa;">1h 50m</div><div class="t" style="left:991px;top:845px;color:#5ebcaa;">R</div><div class="t" style="left:1117px;top:845px;color:#5ebcaa;">English</div><div class="t" style="left:1234px;top:845px;color:#5ebcaa;">2.79 GB</div><div class="t" style="left:1351px;top:845px;color:#5ebcaa;">HD–1080p</div><div class="t" style="left:37px;top:865px;color:#5ebcaa;">The Invitation</div><div class="t" style="left:550px;top:865px;color:#5ebcaa;">2022</div><div class="t" style="left:631px;top:865px;color:#5ebcaa;">Screen Gems</div><div class="t" style="left:874px;top:865px;color:#5ebcaa;">1h 45m</div><div class="t" style="left:991px;top:865px;color:#5ebcaa;">PG–13</div><div class="t" style="left:1117px;top:865px;color:#5ebcaa;">English</div><div class="t" style="left:1234px;top:865px;color:#5ebcaa;">1.95 GB</div><div class="t" style="left:1351px;top:865px;color:#5ebcaa;">HD–1080p</div><div class="t" style="left:37px;top:885px;color:#5ebcaa;">The Orphanage</div><div class="t" style="left:550px;top:885px;color:#5ebcaa;">2007</div><div class="t" style="left:631px;top:885px;color:#5ebcaa;">Telecinco Cinema</div><div class="t" style="left:874px;top:885px;color:#5ebcaa;">1h 45m</div><div class="t" style="left:991px;top:885px;color:#5ebcaa;">R</div><div class="t" style="left:1117px;top:885px;color:#5ebcaa;">Spanish</div><div class="t" style="left:1234px;top:885px;color:#5ebcaa;">0.68 GB</div><div class="t" style="left:1351px;top:885px;color:#5ebcaa;">HD–1080p</div><div class="t" style="left:37px;top:905px;color:#5ebcaa;">Train to Busan</div><div class="t" style="left:550px;top:905px;color:#5ebcaa;">2016</div><div class="t" style="left:631px;top:905px;color:#5ebcaa;">Next Entertainment World</div><div class="t" style="left:874px;top:905px;color:#5ebcaa;">1h 58m</div><div class="t" style="left:991px;top:905px;color:#5ebcaa;">NR</div><div class="t" style="left:1117px;top:905px;color:#5ebcaa;">Korean</div><div class="t" style="left:1234px;top:905px;color:#5ebcaa;">1.84 GB</div><div class="t" style="left:1351px;top:905px;color:#5ebcaa;">HD–1080p</div><div class="t" style="left:19px;top:945px;color:#3585e2;">&lt;a&gt; add | &lt;e&gt; edit | &lt;o&gt; sort | &lt;del&gt; delete | &lt;s&gt; search | &lt;f&gt; filter | &lt;ctrl–r&gt; refresh | &lt;u&gt; update all | &lt;enter&gt; details | &lt;esc&gt; cancel filter</div></div>
</body></html>
